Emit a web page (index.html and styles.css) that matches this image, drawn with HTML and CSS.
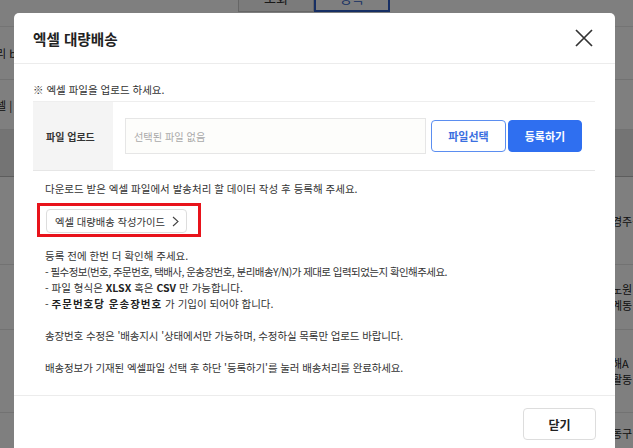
FILE: index.html
```html
<!DOCTYPE html>
<html lang="ko">
<head>
<meta charset="utf-8">
<title>엑셀 대량배송</title>
<link rel="stylesheet" href="styles.css">
</head>
<body>
<div class="page">
  <div class="tabs">
    <div class="tab">조회</div>
    <div class="tab tab-active">등록</div>
  </div>
  <div class="row r1"><span class="lt">관리 b</span></div>
  <div class="row r2"><span class="lt">엑셀 |</span></div>
  <div class="row r3 thead"></div>
  <div class="row r4"><span class="rt">경주군</span></div>
  <div class="row r5"><span class="rt">노원<br>계동</span></div>
  <div class="row r6"><span class="rt">해A<br>활동</span></div>
  <div class="row r7"><span class="rt">동구</span></div>
</div>
<div class="overlay"></div>
<div class="modal">
  <div class="modal-header">
    <h2 class="modal-title">엑셀 대량배송</h2>
    <svg class="close" width="20" height="20" viewBox="0 0 20 20"><path d="M2 2 L18 18 M18 2 L2 18" stroke="#333" stroke-width="1.7" fill="none"/></svg>
  </div>
  <div class="modal-body">
    <p class="notice">※ 엑셀 파일을 업로드 하세요.</p>
    <div class="upload">
      <div class="upload-label">파일 업로드</div>
      <div class="upload-cell">
        <div class="file-input">선택된 파일 없음</div>
        <button class="btn btn-outline">파일선택</button>
        <button class="btn btn-primary">등록하기</button>
      </div>
    </div>
    <div class="info">
      <p class="line">다운로드 받은 엑셀 파일에서 발송처리 할 데이터 작성 후 등록해 주세요.</p>
      <div class="highlight"><button class="guide">엑셀 대량배송 작성가이드<svg class="chev" width="7" height="11" viewBox="0 0 7 11"><path d="M1 1 L6 5.5 L1 10" stroke="#444" stroke-width="1.1" fill="none"/></svg></button></div>
      <div class="checks">
        <p class="line">등록 전에 한번 더 확인해 주세요.</p>
        <p class="line tight">- 필수정보(번호, 주문번호, 택배사, 운송장번호, 분리배송Y/N)가 제대로 입력되었는지 확인해주세요.</p>
        <p class="line">- 파일 형식은 <b>XLSX</b> 혹은 <b>CSV</b> 만 가능합니다.</p>
        <p class="line">- <b class="wide">주문번호당 운송장번호</b> 가 기입이 되어야 합니다.</p>
      </div>
      <p class="line gap slight">송장번호 수정은 '배송지시 '상태에서만 가능하며, 수정하실 목록만 업로드 바랍니다.</p>
      <p class="line gap slight">배송정보가 기재된 엑셀파일 선택 후 하단 '등록하기'를 눌러 배송처리를 완료하세요.</p>
    </div>
  </div>
  <div class="modal-footer">
    <button class="btn btn-close">닫기</button>
  </div>
</div>
</body>
</html>
```
FILE: styles.css
```css
* { box-sizing: border-box; }
html, body { margin: 0; padding: 0; }
body {
  width: 633px;
  height: 448px;
  overflow: hidden;
  position: relative;
  background: #fff;
  font-family: "Noto Sans CJK KR", "Noto Sans", sans-serif;
  color: #333;
}
.page { width: 633px; height: 448px; overflow: hidden; }
.tabs {
  height: 27px;
  display: flex;
  padding-left: 238px;
  border-bottom: 1px solid #e8e8e8;
}
.tab {
  width: 76px;
  height: 30px;
  margin-top: -18px;
  border: 1px solid #ccc;
  display: flex;
  align-items: center;
  justify-content: center;
  font-size: 13px;
  color: #333;
  background: #f7f7f7;
}
.tab-active { border: 2px solid #2f5fc8; color: #2f5fc8; background: #fff; }
.row {
  border-bottom: 1px solid #e4e4e4;
  display: flex;
  align-items: center;
  font-size: 11px;
  line-height: 16px;
  color: #222;
  white-space: nowrap;
}
.r1 { height: 53px; }
.r2 { height: 50px; }
.r3 { height: 47px; background: #e9e9e9; border-bottom: 1px solid #bbb; }
.r4 { height: 88px; }
.r5 { height: 65px; }
.r6 { height: 83px; }
.r7 { height: 40px; }
.lt { margin-left: -14px; }
.rt { margin-left: 612px; }
.overlay {
  position: absolute;
  inset: 0;
  background: rgba(0, 0, 0, 0.5);
}
.modal {
  position: absolute;
  left: 14px;
  top: 13px;
  width: 601px;
  height: 435px;
  overflow: hidden;
  background: #fff;
  border-radius: 5px 5px 0 0;
}
.modal-header {
  height: 51px;
  border-bottom: 1px solid #ececec;
  display: flex;
  align-items: center;
  justify-content: space-between;
  padding: 0 21px 0 19px;
}
.modal-title {
  margin: 0;
  font-size: 14.6px;
  font-weight: 700;
  color: #222;
}
.close { display: block; }
.modal-body {
  padding: 18px 20px 20px 19px;
  height: 332px;
  border-bottom: 1px solid #ececec;
}
.notice {
  margin: 0;
  font-size: 10.5px;
  line-height: 16px;
  color: #333;
}
.upload {
  margin-top: 3px;
  height: 70px;
  display: grid;
  grid-template-columns: 80px 1fr;
  border-top: 1px solid #eee;
  border-bottom: 1px solid #e6e6e6;
}
.upload-label {
  background: #f4f4f4;
  display: flex;
  align-items: center;
  padding-left: 13px;
  font-size: 10px;
  font-weight: 700;
  color: #333;
}
.upload-cell {
  display: flex;
  align-items: center;
  padding: 0 13px 0 12px;
}
.file-input {
  width: 301px;
  height: 36px;
  border: 1px solid #e6e6e6;
  background: #fdfdfb;
  display: flex;
  align-items: center;
  padding-left: 8px;
  font-size: 10.2px;
  color: #aaa;
  margin-right: 5px;
}
.btn {
  font-family: inherit;
  height: 32px;
  border-radius: 4px;
  font-size: 11px;
  font-weight: 700;
  cursor: pointer;
  padding: 0;
}
.btn-outline {
  width: 75px;
  border: 1px solid #5b8ef0;
  background: #fff;
  color: #3b6fe0;
  margin-right: 2px;
}
.btn-primary {
  width: 74px;
  border: 1px solid #2f6ff0;
  background: #2f6ff0;
  color: #fff;
}
.info { padding-left: 12px; padding-top: 10px; }
.line {
  margin: 0;
  font-size: 10.5px;
  line-height: 16px;
  color: #333;
  white-space: nowrap;
}
.line b { font-weight: 700; color: #222; }
.tight { letter-spacing: -0.55px; }
.slight { letter-spacing: -0.12px; }
.wide { letter-spacing: 1px; }
.highlight {
  display: inline-block;
  margin: 6px 0 0 -8px;
  border: 3px solid #e8131b;
  padding: 3px 11px 1px 6px;
}
.guide {
  display: flex;
  align-items: center;
  gap: 7px;
  height: 24px;
  width: 141px;
  padding: 0 0 0 8px;
  border: 1px solid #ddd;
  border-radius: 4px;
  background: #fff;
  font-family: inherit;
  font-size: 10.3px;
  color: #333;
}
.chev { display: block; }
.checks { margin-top: 11px; }
.gap { margin-top: 16px; }
.modal-footer {
  display: flex;
  justify-content: flex-end;
  padding: 12px 19px 0 0;
}
.btn-close {
  width: 73px;
  border: 1px solid #ddd;
  background: #fff;
  color: #222;
  font-size: 12px;
}
```
